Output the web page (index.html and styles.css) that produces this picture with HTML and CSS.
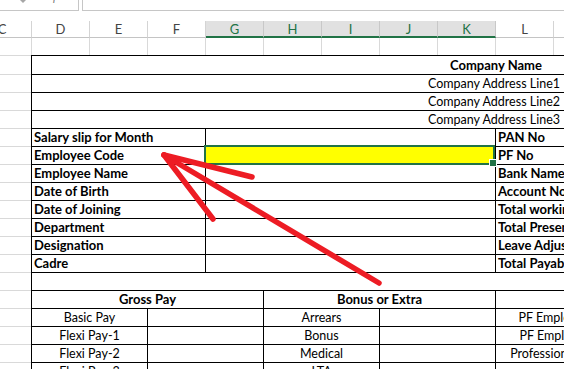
FILE: index.html
```html
<!DOCTYPE html>
<html>
<head>
<meta charset="utf-8">
<link rel="stylesheet" href="styles.css">
</head>
<body>
<div class="fbar">
  <div class="namebox"><span class="caret"></span><span class="fx">fx</span></div>
  <div class="finput"></div>
</div>
<div class="colheads">
  <div class="ch first">C</div>
  <div class="ch">D</div>
  <div class="ch">E</div>
  <div class="ch">F</div>
  <div class="ch sel">G</div>
  <div class="ch sel">H</div>
  <div class="ch sel">I</div>
  <div class="ch sel">J</div>
  <div class="ch sel">K</div>
  <div class="ch">L</div>
  <div class="ch">M</div>
</div>
<div class="row1"></div>
<div class="main">
  <div class="gutter">
    <div class="g tall"></div>
    <div class="g"></div><div class="g"></div><div class="g"></div><div class="g"></div>
    <div class="g"></div><div class="g"></div><div class="g"></div><div class="g"></div>
    <div class="g"></div><div class="g"></div><div class="g"></div><div class="g"></div>
    <div class="g"></div><div class="g"></div><div class="g"></div><div class="g"></div>
    <div class="g"></div>
  </div>
  <div class="slip">
    <div class="r tall"><div class="c merged b">Company Name</div></div>
    <div class="r"><div class="c addr">Company Address Line1</div></div>
    <div class="r"><div class="c addr">Company Address Line2</div></div>
    <div class="r"><div class="c addr">Company Address Line3</div></div>

    <div class="r"><div class="c lab b">Salary slip for Month</div><div class="c val"></div><div class="c rlab b">PAN No</div></div>
    <div class="r"><div class="c lab b">Employee Code</div><div class="c val selcell"></div><div class="c rlab b">PF No</div></div>
    <div class="r"><div class="c lab b">Employee Name</div><div class="c val"></div><div class="c rlab b">Bank Name</div></div>
    <div class="r"><div class="c lab b">Date of Birth</div><div class="c val"></div><div class="c rlab b">Account No.</div></div>
    <div class="r"><div class="c lab b">Date of Joining</div><div class="c val"></div><div class="c rlab b">Total working Days</div></div>
    <div class="r"><div class="c lab b">Department</div><div class="c val"></div><div class="c rlab b">Total Present Days</div></div>
    <div class="r"><div class="c lab b">Designation</div><div class="c val"></div><div class="c rlab b">Leave Adjusted</div></div>
    <div class="r"><div class="c lab b">Cadre</div><div class="c val"></div><div class="c rlab b">Total Payable Days</div></div>
    <div class="r"></div>

    <div class="r"><div class="c sec b">Gross Pay</div><div class="c sec b">Bonus or Extra</div><div class="c sec last"></div></div>
    <div class="r"><div class="c it">Basic Pay</div><div class="c it"></div><div class="c it">Arrears</div><div class="c it"></div><div class="c it last">PF Employee</div></div>
    <div class="r"><div class="c it">Flexi Pay-1</div><div class="c it"></div><div class="c it">Bonus</div><div class="c it"></div><div class="c it last">PF Employer</div></div>
    <div class="r"><div class="c it">Flexi Pay-2</div><div class="c it"></div><div class="c it">Medical</div><div class="c it"></div><div class="c it last">Professional Tax</div></div>
    <div class="r"><div class="c it">Flexi Pay-3</div><div class="c it"></div><div class="c it">LTA</div><div class="c it"></div><div class="c it last"></div></div>
  </div>
</div>
<svg class="marks" width="564" height="369" viewBox="0 0 564 369">
  <g stroke="#ed1c24" stroke-width="5.5" stroke-linecap="round" fill="none">
    <line x1="164" y1="155" x2="379" y2="283"/>
    <line x1="164" y1="155" x2="252" y2="177"/>
    <line x1="164" y1="155" x2="213" y2="219"/>
  </g>
</svg>
</body>
</html>
```
FILE: styles.css
```css
* { box-sizing: border-box; margin: 0; padding: 0; }
html, body { width: 564px; height: 369px; overflow: hidden; background: #fff; }
body {
  position: relative;
  font-family: Lato, "Liberation Sans", sans-serif;
  font-size: 12.5px;
  color: #000;
}

/* formula bar */
.fbar { display: flex; height: 11px; }
.namebox {
  width: 79px;
  display: flex;
  border-right: 1px solid #c6c6c6;
  border-bottom: 1px solid #c6c6c6;
}
.caret {
  margin-left: 20px;
  width: 0; height: 0;
  border-left: 3px solid transparent;
  border-right: 3px solid transparent;
  border-top: 3px solid #a6a6a6;
}
.fx {
  margin-left: 27px;
  margin-top: -10px;
  font: italic 12px/13px "Liberation Serif", serif;
  color: #777;
}
.finput {
  flex: 1;
  margin-left: 3px;
  border-left: 1px solid #c6c6c6;
  border-bottom: 1px solid #c6c6c6;
}

/* column headers */
.colheads { display: flex; margin-top: 10px; height: 17px; }
.ch {
  flex: none;
  width: 58px;
  height: 17px;
  border-right: 1px solid #d4d4d4;
  border-bottom: 1px solid #c4c4c4;
  text-align: center;
  line-height: 16px;
  color: #444;
  font-size: 13px;
}
.ch.first { margin-left: -27px; width: 59px; }
.ch.sel {
  background: #e1e1e1;
  color: #217346;
  border-bottom: 2px solid #217346;
  border-right-color: #c8c8c8;
}

/* first empty sheet row */
.row1 {
  height: 17px;
  background-image: linear-gradient(to right, #d9d9d9 0 1px, transparent 1px);
  background-size: 58px 100%;
  background-position: 31px 0;
}

.main { display: flex; }
.gutter { flex: none; width: 31px; border-top: 1px solid #d9d9d9; }
.g { height: 18px; border-bottom: 1px solid #d9d9d9; }
.g.tall { height: 19px; }

/* salary slip form */
.slip {
  flex: none;
  width: 930px;
  border-top: 1px solid #000;
  border-left: 1px solid #000;
  background: #fff;
}
.r { display: flex; height: 18px; border-bottom: 1px solid #000; }
.r.tall { height: 19px; }
.c {
  flex: none;
  height: 100%;
  padding: 0 2px;
  line-height: 17px;
  white-space: nowrap;
  overflow: hidden;
}
.r.tall .c { line-height: 18px; }
.b { font-weight: 700; font-size: 13px; }
.merged { width: 928px; text-align: center; }
.addr { width: 529px; text-align: right; padding-right: 1px; }
.lab { width: 174px; border-right: 1px solid #000; }
.val { width: 290px; border-right: 1px solid #000; }
.rlab { width: 120px; }
.sec { width: 232px; border-right: 1px solid #000; text-align: center; }
.sec.last { width: 116px; border-right: none; }
.it { width: 116px; border-right: 1px solid #000; text-align: center; }
.it.last { border-right: none; }

/* selected cell */
.selcell { position: relative; overflow: visible; background: #ffff00; }
.selcell::after {
  content: "";
  position: absolute;
  left: -2px; top: -2px; right: 0; bottom: -1px;
  border: 2px solid #217346;
}
.selcell::before {
  content: "";
  position: absolute;
  right: -2px; bottom: -3px;
  width: 6px; height: 6px;
  background: #217346;
  border: 1px solid #fff;
  z-index: 1;
}

/* annotation */
.marks { position: absolute; left: 0; top: 0; pointer-events: none; }
```
